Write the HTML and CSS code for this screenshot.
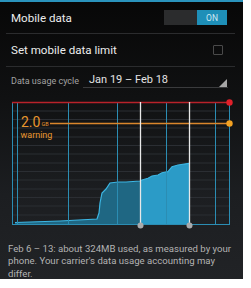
FILE: index.html
```html
<!DOCTYPE html>
<html>
<head>
<meta charset="utf-8">
<link rel="stylesheet" href="styles.css">
</head>
<body>
<div class="screen">
  <div class="topline"></div>
  <div class="pref pref-switch">
    <span class="title">Mobile data</span>
    <div class="switch"><span class="switch-off"></span><span class="switch-on">ON</span></div>
  </div>
  <div class="divider"></div>
  <div class="pref pref-check">
    <span class="title">Set mobile data limit</span>
    <span class="checkbox"></span>
  </div>
  <div class="divider"></div>
  <div class="cycle">
    <span class="cycle-label">Data usage cycle</span>
    <div class="spinner"><span class="spinner-text">Jan 19 – Feb 18</span><span class="spinner-corner"></span></div>
  </div>
  <svg class="chart" width="243" height="140" viewBox="0 0 243 140">
    <g class="grid">
      <line x1="12" y1="16" x2="229" y2="16"/>
      <line x1="12" y1="24.5" x2="229" y2="24.5"/>
      <line x1="12" y1="33" x2="229" y2="33"/>
      <line x1="12" y1="42" x2="229" y2="42"/>
      <line x1="12" y1="50.5" x2="229" y2="50.5"/>
      <line x1="12" y1="59" x2="229" y2="59"/>
      <line x1="12" y1="68" x2="229" y2="68"/>
      <line x1="12" y1="76.5" x2="229" y2="76.5"/>
      <line x1="12" y1="85" x2="229" y2="85"/>
      <line x1="12" y1="94" x2="229" y2="94"/>
      <line x1="12" y1="102.5" x2="229" y2="102.5"/>
      <line x1="12" y1="111" x2="229" y2="111"/>
      <line x1="12" y1="120" x2="229" y2="120"/>
    </g>
    <polygon class="fill-dim" points="15,129 15,127.5 30,127 60,126 97,124 99,118 100,108 102,98 106,94 110,88 118,87 126,87 133,86.5 140,86 140,129"/>
    <polygon class="fill-sel" points="140,129 140,86 142,85 148,83.3 152,81 158,80 162,77.7 168,76.7 172,71.7 178,70 189,68.3 189,129"/>
    <polyline class="fill-edge" points="15,127.5 30,127 60,126 97,124 99,118 100,108 102,98 106,94 110,88 118,87 126,87 133,86.5 140,86 142,85 148,83.3 152,81 158,80 162,77.7 168,76.7 172,71.7 178,70 189,68.3"/>
    <g class="vlines">
      <line x1="12.5" y1="7" x2="12.5" y2="129.5"/>
      <line x1="17.5" y1="7" x2="17.5" y2="129.5"/>
      <line x1="68.5" y1="7" x2="68.5" y2="129.5"/>
      <line x1="117.5" y1="7" x2="117.5" y2="129.5"/>
      <line x1="166.5" y1="7" x2="166.5" y2="129.5"/>
      <line x1="215.5" y1="7" x2="215.5" y2="129.5"/>
      <line x1="229.5" y1="7" x2="229.5" y2="129.5"/>
      <line x1="12" y1="129.5" x2="230" y2="129.5"/>
    </g>
    <line class="limit" x1="12" y1="7.5" x2="229" y2="7.5"/>
    <circle class="limit-dot" cx="229.5" cy="7.5" r="3.2"/>
    <line class="warn" x1="50" y1="28.5" x2="229" y2="28.5"/>
    <circle class="warn-dot" cx="229.5" cy="28.5" r="3.2"/>
    <line class="sweep" x1="140.5" y1="7" x2="140.5" y2="130"/>
    <line class="sweep" x1="189.5" y1="7" x2="189.5" y2="130"/>
    <circle class="sweep-dot" cx="140.5" cy="130.5" r="3"/>
    <circle class="sweep-dot" cx="189.5" cy="130.5" r="3"/>
    <text class="warn-value" x="21" y="31.5">2.0</text>
    <text class="warn-unit" x="41.5" y="31">GB</text>
    <text class="warn-label" x="20.5" y="43">warning</text>
  </svg>
  <p class="summary">Feb 6 – 13: about 324MB used, as measured by your phone. Your carrier's data usage accounting may differ.</p>
</div>
</body>
</html>
```
FILE: styles.css
```css
html, body {
  margin: 0;
  padding: 0;
  background: #ffffff;
}
.screen {
  width: 243px;
  height: 279px;
  overflow: hidden;
  background: linear-gradient(#070707 0%, #101112 35%, #1c1e21 70%, #212326 100%);
  font-family: Roboto, "Noto Sans", sans-serif;
  display: flex;
  flex-direction: column;
}
.topline {
  height: 2px;
  background: #2a93bc;
  flex: none;
}
.pref {
  display: flex;
  align-items: center;
  justify-content: space-between;
  padding-left: 11px;
  flex: none;
}
.pref-switch {
  height: 31px;
  padding-right: 16px;
}
.pref-check {
  height: 32px;
  padding-right: 20px;
}
.title {
  color: #ececec;
  font-size: 11.6px;
}
.switch {
  display: flex;
  width: 63px;
  height: 15px;
}
.switch-off {
  flex: 1;
  background: #2b2c2d;
}
.switch-on {
  width: 30px;
  background: #1e8fb8;
  color: #cfe9f3;
  font-size: 8.5px;
  display: flex;
  align-items: center;
  justify-content: center;
}
.checkbox {
  width: 8px;
  height: 8px;
  border: 1px solid #4a4a4a;
  border-radius: 1px;
}
.divider {
  height: 1px;
  margin: 0 8px 0 6px;
  background: #2b2c2e;
  flex: none;
}
.cycle {
  height: 28px;
  display: flex;
  align-items: flex-start;
  padding-left: 11px;
  flex: none;
}
.cycle-label {
  color: #a2a2a2;
  font-size: 9px;
  margin-top: 9px;
}
.spinner {
  position: relative;
  margin-left: 4px;
  width: 145px;
  height: 21px;
  border-bottom: 1px solid #3a3b3d;
  padding-left: 6px;
  box-sizing: border-box;
}
.spinner-text {
  display: block;
  color: #e4e4e4;
  font-size: 11px;
  margin-top: 6px;
}
.spinner-corner {
  position: absolute;
  right: 1px;
  bottom: 0;
  width: 0;
  height: 0;
  border-left: 8px solid transparent;
  border-bottom: 8px solid #a6a6a6;
}
.chart {
  display: block;
  flex: none;
}
.grid line {
  stroke: #2b2e33;
  stroke-width: 1;
}
.fill-dim {
  fill: #1f6783;
}
.fill-sel {
  fill: #2b9bc7;
}
.fill-edge {
  fill: none;
  stroke: #3cb6e3;
  stroke-width: 1.2;
}
.vlines line {
  stroke: #2b8db3;
  stroke-width: 1;
}
.limit {
  stroke: #b8222a;
  stroke-width: 1.5;
}
.limit-dot {
  fill: #e0202a;
}
.warn {
  stroke: #d9862c;
  stroke-width: 1.3;
}
.warn-dot {
  fill: #f3a122;
}
.sweep {
  stroke: #e8e8e8;
  stroke-width: 1.3;
}
.sweep-dot {
  fill: #a9abad;
}
.warn-value {
  fill: #e8962e;
  font-family: Roboto, sans-serif;
  font-size: 14px;
}
.warn-unit {
  fill: #e8962e;
  font-family: Roboto, sans-serif;
  font-size: 5.5px;
}
.warn-label {
  fill: #e8962e;
  font-family: Roboto, sans-serif;
  font-size: 9px;
}
.summary {
  margin: 8px 0 0 0;
  padding: 0 4px 0 8px;
  color: #b3b3b3;
  font-size: 9.6px;
  line-height: 12.3px;
}
```
